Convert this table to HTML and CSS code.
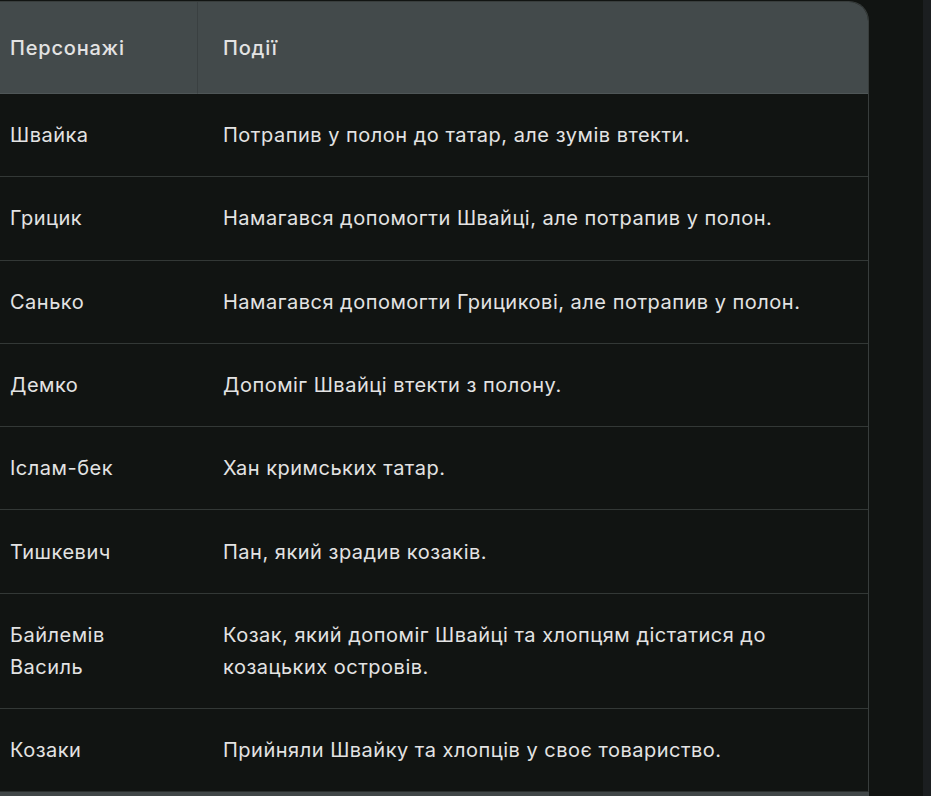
FILE: index.html
```html
<!DOCTYPE html>
<html lang="uk">
<head>
<meta charset="utf-8">
<link rel="stylesheet" href="styles.css">
</head>
<body>
<div class="page">
  <div class="scroller">
    <table class="grid">
      <thead>
        <tr><th class="c1">Персонажі</th><th class="c2">Події</th></tr>
      </thead>
      <tbody>
        <tr><td>Швайка</td><td>Потрапив у полон до татар, але зумів втекти.</td></tr>
        <tr><td>Грицик</td><td>Намагався допомогти Швайці, але потрапив у полон.</td></tr>
        <tr><td>Санько</td><td>Намагався допомогти Грицикові, але потрапив у полон.</td></tr>
        <tr><td>Демко</td><td>Допоміг Швайці втекти з полону.</td></tr>
        <tr><td>Іслам-бек</td><td>Хан кримських татар.</td></tr>
        <tr><td>Тишкевич</td><td>Пан, який зрадив козаків.</td></tr>
        <tr><td>Байлемів Василь</td><td>Козак, який допоміг Швайці та хлопцям дістатися до козацьких островів.</td></tr>
        <tr><td>Козаки</td><td>Прийняли Швайку та хлопців у своє товариство.</td></tr>
      </tbody>
    </table>
    <div class="footer-bar"></div>
  </div>
  <div class="gap"></div>
  <div class="rail"></div>
</div>
</body>
</html>
```
FILE: styles.css
```css
html, body {
  margin: 0;
  padding: 0;
  background: #111412;
}
body {
  font-family: Inter, Roboto, "Noto Sans", "Liberation Sans", sans-serif;
  color: #e3e3e3;
}
.page {
  display: flex;
  height: 796px;
  overflow: hidden;
}
.scroller {
  width: 869px;
  flex: none;
  overflow: hidden;
  padding-top: 1px;
}
.gap {
  flex: 1;
}
.rail {
  width: 8px;
  flex: none;
  background: #1b1e20;
}
.grid {
  margin-left: -16px;
  width: 885px;
  border-collapse: separate;
  border-spacing: 0;
  border: 1px solid #383d3c;
  border-left: none;
  border-bottom-color: #2a2e2d;
  border-top-right-radius: 20px;
  table-layout: fixed;
  font-size: 20px;
  line-height: 32px;
  letter-spacing: 0.5px;
}
.grid th {
  background: #434a4b;
  text-align: left;
  font-weight: 500;
  letter-spacing: 0.8px;
  padding: 29.5px 26px 29.5px 26px;
  border-bottom: 1px solid #4f5657;
}
.grid th.c1 {
  width: 161px;
  border-right: 1px solid #3a4041;
}
.grid th.c2 {
  padding-left: 25px;
  border-top-right-radius: 19px;
}
.grid td {
  padding: 25.15px 26px;
  border-bottom: 1px solid #333836;
  vertical-align: top;
}
.grid td + td {
  padding-left: 25px;
}
.grid td:first-child {
  padding-right: 60px;
}
.grid tbody tr:last-child td {
  border-bottom: none;
}
.footer-bar {
  height: 12px;
  background: #414748;
}
```
